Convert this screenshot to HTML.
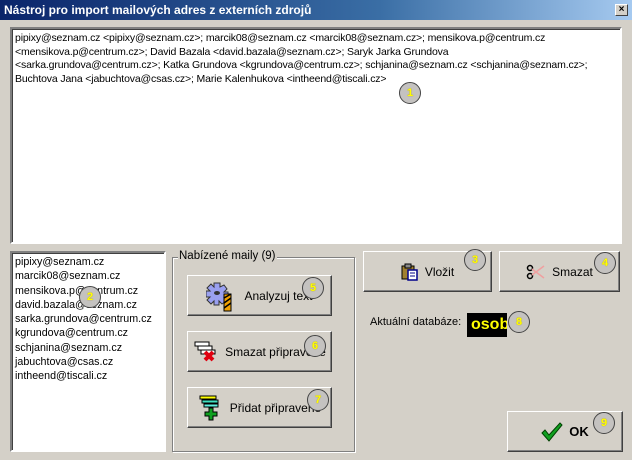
<!DOCTYPE html>
<html><head><meta charset="utf-8"><style>
*{margin:0;padding:0;box-sizing:border-box}
body{width:632px;height:460px;background:#d4d0c8;font-family:"Liberation Sans",sans-serif;font-size:11px;color:#000;position:relative;overflow:hidden}
.a{position:absolute}
.title{left:0;top:0;width:632px;height:20px;background:linear-gradient(90deg,#0a246a,#3a6ea5 60%,#a6caf0);color:#fff;font-weight:bold;font-size:12px;line-height:20px;padding-left:4px}
.close{left:615px;top:4px;width:13px;height:12px;background:#d4d0c8;border:1px solid;border-color:#fff #404040 #404040 #fff;font-size:10px;line-height:9px;text-align:center;color:#000;font-weight:bold}
.sunk{background:#fff;border:2px solid;border-color:#808080 #fff #fff #808080;box-shadow:inset 1px 1px 0 #404040}
.btn{background:#d4d0c8;border:1px solid;border-color:#fff #404040 #404040 #fff;box-shadow:inset -1px -1px 0 #808080;display:flex;align-items:center;justify-content:center;font-size:12px}
.badge{width:22px;height:22px;border-radius:50%;background:#c4c2c0;border:1px solid #444;color:#ff0;font-weight:bold;font-size:11px;text-align:center;line-height:20px;text-shadow:0 0 1px #a08000}
.grp{border:1px solid #808080;box-shadow:1px 1px 0 #fff, inset 1px 1px 0 #fff}
</style></head><body>
<div class="a title">Nástroj pro import mailových adres z externích zdrojů</div>
<div class="a close">×</div>

<div class="a sunk" style="left:10px;top:27px;width:612px;height:217px;padding:3px 3px;font-size:10.5px;line-height:13.5px;letter-spacing:-0.15px">pipixy@seznam.cz &lt;pipixy@seznam.cz&gt;; marcik08@seznam.cz &lt;marcik08@seznam.cz&gt;; mensikova.p@centrum.cz<br>&lt;mensikova.p@centrum.cz&gt;; David Bazala &lt;david.bazala@seznam.cz&gt;; Saryk Jarka Grundova<br>&lt;sarka.grundova@centrum.cz&gt;; Katka Grundova &lt;kgrundova@centrum.cz&gt;; schjanina@seznam.cz &lt;schjanina@seznam.cz&gt;;<br>Buchtova Jana &lt;jabuchtova@csas.cz&gt;; Marie Kalenhukova &lt;intheend@tiscali.cz&gt;</div>

<div class="a sunk" style="left:10px;top:251px;width:156px;height:201px;padding:2px 3px;line-height:14.3px;font-size:10.7px">pipixy@seznam.cz<br>marcik08@seznam.cz<br>mensikova.p@centrum.cz<br>david.bazala@seznam.cz<br>sarka.grundova@centrum.cz<br>kgrundova@centrum.cz<br>schjanina@seznam.cz<br>jabuchtova@csas.cz<br>intheend@tiscali.cz</div>

<div class="a grp" style="left:172px;top:257px;width:183px;height:195px"></div>
<div class="a" style="left:178px;top:250px;background:#d4d0c8;padding:0 1px;font-size:11.5px">Nabízené maily (9)</div>

<div class="a btn" style="left:187px;top:275px;width:145px;height:41px">
<svg width="34" height="34" viewBox="0 0 34 34" style="margin-right:4px"><path d="M8 4h6v4l4-2 3 4-3 3h4v6h-4l2 3-4 3-3-3v4H8v-4l-3 3-4-4 3-3H0v-6h4L1 9l4-4 3 3z" fill="#9aa0f0" stroke="#333" stroke-width="1"/><ellipse cx="11" cy="14" rx="3" ry="2" fill="#333"/><path d="M18 15h7v17h-7z" fill="#f0a000" stroke="#000"/><path d="M18 19l7-4M18 24l7-5M18 29l7-5" stroke="#000" stroke-width="1.5"/></svg>Analyzuj text</div>
<div class="a btn" style="left:187px;top:331px;width:145px;height:41px">
<svg width="28" height="24" viewBox="0 0 28 24" style="margin-right:4px"><path d="M2 2h14v4H2zM5 6h14v4H5zM8 10h14v4H8z" fill="#fff" stroke="#000"/><path d="M12 12l8 8M20 12l-8 8" stroke="#e00010" stroke-width="4"/></svg>Smazat připravené</div>
<div class="a btn" style="left:187px;top:387px;width:145px;height:41px">
<svg width="28" height="28" viewBox="0 0 28 28" style="margin-right:4px"><path d="M2 2h16v3H2z" fill="#ff0" stroke="#000"/><path d="M4 6h16v3H4z" fill="#40e0c0" stroke="#000"/><path d="M6 10h14v3H6z" fill="#60f0e0" stroke="#000"/><path d="M11 14h4v4h4v4h-4v4h-4v-4H7v-4h4z" fill="#10a020" stroke="#000"/></svg>Přidat připravené</div>

<div class="a btn" style="left:363px;top:251px;width:129px;height:41px">
<svg width="18" height="18" viewBox="0 0 18 18" style="margin-right:6px"><path d="M1 3h12v13H1z" fill="#a08030" stroke="#000"/><path d="M4 1h6v4H4z" fill="#888" stroke="#000"/><path d="M7 7h9v10H7z" fill="#fff" stroke="#00008a" stroke-width="1.5"/><path d="M9 10h5M9 13h5" stroke="#00008a"/></svg>Vložit</div>
<div class="a btn" style="left:499px;top:251px;width:121px;height:41px">
<svg width="20" height="16" viewBox="0 0 20 16" style="margin-right:6px"><circle cx="4" cy="4" r="2.5" fill="none" stroke="#000" stroke-width="1.5"/><circle cx="4" cy="12" r="2.5" fill="none" stroke="#000" stroke-width="1.5"/><path d="M6 5l12 9M6 11l12-9" stroke="#f0a0a0" stroke-width="1.5"/></svg>Smazat</div>

<div class="a" style="left:370px;top:316px;font-size:11px">Aktuální databáze:</div>
<div class="a" style="left:467px;top:313px;width:40px;height:24px;background:#000;color:#ff0;font-weight:bold;font-size:16px;line-height:24px;padding-left:4px;overflow:hidden">osob</div>

<div class="a btn" style="left:507px;top:411px;width:116px;height:41px;font-weight:bold;font-size:13px">
<svg width="22" height="20" viewBox="0 0 22 20" style="margin-right:6px"><path d="M1 11l3-3 4 5L19 1l2 2L8 19z" fill="#10a020" stroke="#004000"/></svg>OK</div>

<div class="a badge" style="left:399px;top:82px">1</div>
<div class="a badge" style="left:79px;top:286px">2</div>
<div class="a badge" style="left:464px;top:249px">3</div>
<div class="a badge" style="left:594px;top:252px">4</div>
<div class="a badge" style="left:302px;top:277px">5</div>
<div class="a badge" style="left:304px;top:335px">6</div>
<div class="a badge" style="left:307px;top:389px">7</div>
<div class="a badge" style="left:508px;top:311px">8</div>
<div class="a badge" style="left:593px;top:412px">9</div>
</body></html>
